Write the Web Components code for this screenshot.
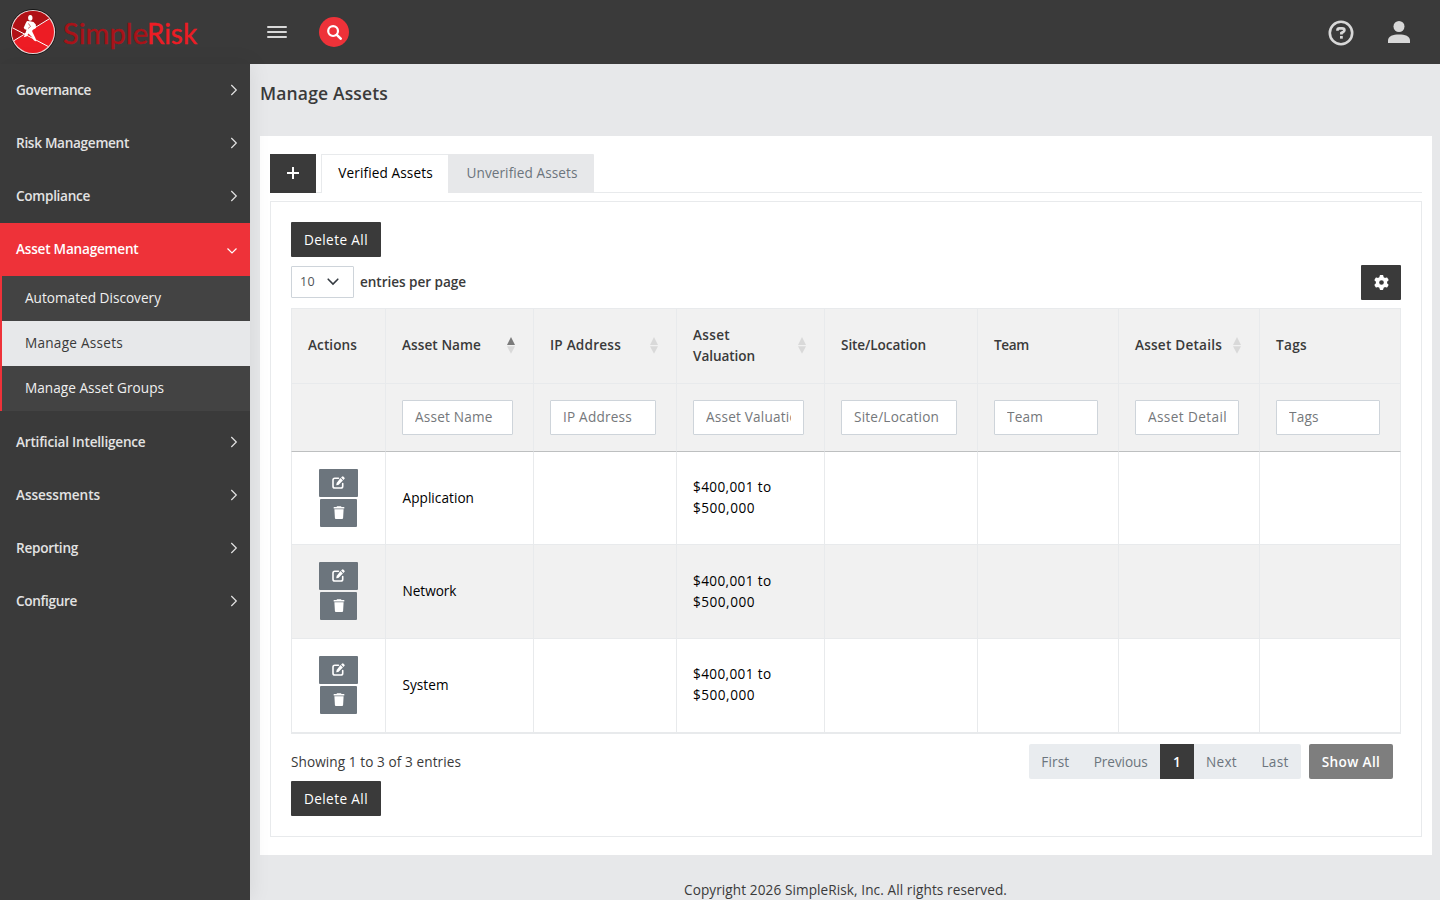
<!DOCTYPE html>
<html lang="en">
<head>
<meta charset="UTF-8">
<title>Manage Assets</title>
<style>
    body {
        margin: 0;
        font-family: "Open Sans", "Noto Sans", sans-serif;
        font-size: 13.6px;
        line-height: 21px;
        color: #3a3a3a;
        background: #e7e8ea;
    }
</style>
</head>
<body>
<risk-app></risk-app>
<script>
const icons = {
    chevron: '<svg width="8" height="12" viewBox="0 0 8 12"><path d="M1.3 1l5 5-5 5" fill="none" stroke="currentColor" stroke-width="1.2"/></svg>',
    down: '<svg width="12" height="8" viewBox="0 0 12 8"><path d="M1.5 1.5L6 6l4.500-4.500" fill="none" stroke="currentColor" stroke-width="1.2"/></svg>',
    search: '<svg width="15" height="15" viewBox="0 0 15 15" fill="none" stroke="currentColor"><circle cx="6.100" cy="6.100" r="4.900" stroke-width="2.200"/><path d="M9.800 9.800l3.900 3.900" stroke-width="2.500" stroke-linecap="round"/></svg>',
    help: '<svg width="26" height="26" viewBox="0 0 26 26" fill="none" stroke="#d8d8d8"><circle cx="13" cy="13" r="11.200" stroke-width="2.600"/><path d="M9.500 10.800V10c0-1 .8-1.700 1.900-1.700h2.800c1.300 0 2.200.8 2.200 1.900 0 1.100-.7 1.600-1.700 2.100l-1.300.8v1.400" stroke-width="2.700"/><path d="M12 17.300h2.800" stroke-width="2.700"/></svg>',
    user: '<svg width="22" height="22" viewBox="0 0 22 22" fill="#d8d8d8"><circle cx="11" cy="5.500" r="5.500"/><path d="M0 22v-2.700C0 15 5 13.400 11 13.400s11 1.600 11 5.900V22z"/></svg>',
    plus: '<svg width="12" height="12" viewBox="0 0 12 12"><path d="M6 .5v11M.5 6h11" stroke="#fff" stroke-width="2" stroke-linecap="round"/></svg>',
    gear: '<svg width="15" height="15" viewBox="0 0 512 512"><path fill="#fff" d="M495.900 166.600c3.200 8.700 .5 18.400-6.400 24.600l-43.300 39.400c1.100 8.300 1.700 16.800 1.700 25.400s-.6 17.100-1.700 25.400l43.300 39.400c6.900 6.200 9.600 15.900 6.400 24.600c-4.400 11.900-9.700 23.300-15.800 34.300l-4.700 8.100c-6.600 11-14 21.400-22.100 31.200c-5.900 7.200-15.700 9.600-24.500 6.800l-55.700-17.700c-13.400 10.300-28.200 18.900-44 25.400l-12.500 57.100c-2 9.100-9 16.300-18.200 17.800c-13.800 2.300-28 3.500-42.500 3.500s-28.700-1.200-42.500-3.500c-9.200-1.500-16.200-8.700-18.200-17.800l-12.500-57.100c-15.800-6.500-30.600-15.100-44-25.400L83.100 425.900c-8.800 2.800-18.600 .3-24.500-6.800c-8.100-9.800-15.500-20.200-22.100-31.200l-4.700-8.100c-6.100-11-11.400-22.400-15.800-34.300c-3.200-8.700-.5-18.400 6.400-24.600l43.300-39.400C64.600 273.100 64 264.600 64 256s.6-17.100 1.700-25.400L22.400 191.200c-6.900-6.200-9.600-15.900-6.400-24.600c4.400-11.900 9.700-23.300 15.800-34.300l4.700-8.100c6.600-11 14-21.400 22.100-31.200c5.900-7.200 15.700-9.600 24.500-6.800l55.700 17.700c13.400-10.300 28.200-18.900 44-25.400l12.500-57.100c2-9.100 9-16.300 18.200-17.800C227.300 1.200 241.500 0 256 0s28.700 1.200 42.500 3.500c9.200 1.500 16.200 8.700 18.200 17.800l12.500 57.100c15.800 6.500 30.600 15.100 44 25.400l55.700-17.700c8.800-2.800 18.600-.3 24.500 6.800c8.100 9.800 15.500 20.200 22.100 31.200l4.700 8.100c6.100 11 11.400 22.400 15.800 34.300zM256 336a80 80 0 1 0 0-160 80 80 0 1 0 0 160z"/></svg>',
    edit: '<svg width="13" height="13" viewBox="0 0 13 13"><path d="M6.500 2.300H2.800A1.800 1.800 0 0 0 1 4.100v6.100A1.800 1.800 0 0 0 2.800 12h6.100a1.800 1.800 0 0 0 1.800-1.800V7.500" fill="none" stroke="#fff" stroke-width="1.600" stroke-linecap="round"/><path fill="#fff" d="M9.900.7a1.200 1.200 0 0 1 1.700 0l.7.7a1.200 1.200 0 0 1 0 1.700l-.8.8-2.400-2.400zM8.500 2.100l2.400 2.400-4 4c-.2.200-.4.300-.7.400l-2 .4.400-2c.1-.3.2-.5.400-.7z"/></svg>',
    trash: '<svg width="12" height="13" viewBox="0 0 12 13" fill="#fff"><path d="M4 .2h4l.5.9h2.800v1.500H.7V1.100h2.800zM1.400 3.200h9.200L10.100 12a1 1 0 0 1-1 .9H2.900a1 1 0 0 1-1-.9z"/></svg>'
};

// Text run that spaces its letters out to a given width
class FitText extends HTMLElement {
    constructor() {
        super();
        this.attachShadow({ mode: 'open' });
        this.shadowRoot.innerHTML = /* html */`
        <style>
            :host { display: inline-block; white-space: nowrap; }
        </style>
        <slot></slot>`;
    }

    connectedCallback() {
        const width = Number(this.getAttribute('w'));
        if (!width) return;
        const natural = this.getBoundingClientRect().width;
        this.style.letterSpacing = ((width - natural) / this.textContent.length).toFixed(3) + 'px';
    }
}

class RiskLogo extends HTMLElement {
    constructor() {
        super();
        this.attachShadow({ mode: 'open' });
        this.shadowRoot.innerHTML = /* html */`
        <style>
            :host { display: block; width: 250px; height: 64px; }
            svg { display: block; }
            text { font-family: Lato, sans-serif; font-size: 28.500px; stroke-width: .4px; }
        </style>
        <svg width="250" height="64" viewBox="0 0 250 64">
            <defs><clipPath id="disc"><circle cx="33" cy="32" r="21"/></clipPath></defs>
            <circle cx="33" cy="32" r="22.900" fill="#151515"/>
            <circle cx="33" cy="32" r="22.100" fill="#e9d5d5"/>
            <g clip-path="url(#disc)">
                <path fill="#ed1c24" d="M10 8h46v48H10z"/>
                <path fill="#b01116" d="M10 8h46v7L25 34.500 10 26z"/>
                <path fill="#b01116" d="M10 26l15 8.500L10 43z"/>
                <path d="M10 26.500L34 39l18 9.500M11 42.500l42-26" fill="none" stroke="#fff" stroke-width="1"/>
            </g>
            <g fill="#fff">
                <ellipse cx="30.300" cy="17.800" rx="2.200" ry="2.900"/>
                <path d="M27 21l3 .3 3.500.7 2.300 2.500.2 3.500-3.500 2-.3 1.500 1.500 3 1.800 3.800.8 3.200-2.300-1-2.500-4-3-3-2 3-2.800.7 1.500-3.500 1.300-4-1.800-.5-1-1.500 2-4.500z"/>
            </g>
            <path d="M28.500 23.500l2 3-2.500 2" fill="none" stroke="#b01116" stroke-width=".6"/>
            <text x="63" y="43.500" fill="#a91218" stroke="#a91218" textLength="85" lengthAdjust="spacingAndGlyphs">Simple</text>
            <text x="147" y="43.500" fill="#ed1c24" stroke="#ed1c24" textLength="50" lengthAdjust="spacingAndGlyphs">Risk</text>
        </svg>`;
    }
}

class TopBar extends HTMLElement {
    constructor() {
        super();
        this.attachShadow({ mode: 'open' });
        this.shadowRoot.innerHTML = /* html */`
        <style>
            :host { display: flex; align-items: center; height: 64px; background: #3a3a3a; }
            .burger { display: grid; gap: 3px; margin: 0 32px 0 17px; }
            .burger i { width: 20px; height: 2px; background: #d8d8d8; border-radius: 1px; }
            .search { display: grid; place-items: center; width: 30px; height: 30px; border-radius: 50%; background: #ee3239; color: #fff; }
            .right { display: flex; align-items: center; gap: 34px; margin-left: auto; margin-right: 30px; }
            .right svg:first-child { margin-top: 2px; }
            svg { display: block; }
        </style>
        <risk-logo></risk-logo>
        <div class="burger"><i></i><i></i><i></i></div>
        <div class="search">${icons.search}</div>
        <div class="right">${icons.help}${icons.user}</div>`;
    }
}

class NavItem extends HTMLElement {
    constructor() {
        super();
        this.attachShadow({ mode: 'open' });
        const open = this.hasAttribute('open');
        this.shadowRoot.innerHTML = /* html */`
        <style>
            :host { display: block; color: #e3e3e3; }
            :host([open]) { margin-bottom: 5px; }
            .row { box-sizing: border-box; display: flex; align-items: center; justify-content: space-between; height: 53px; padding: 0 12px 2px 16px; font-weight: 550; }
            :host([open]) .row { background: #ee3239; color: #fff; }
            svg { display: block; margin-top: ${open ? 4 : 1}px; }
            .sub { border-left: 2px solid #ee3239; background: #434343; }
            :host(:not([open])) .sub { display: none; }
        </style>
        <div class="row"><fit-text w="${this.getAttribute('w')}">${this.getAttribute('label')}</fit-text>${open ? icons.down : icons.chevron}</div>
        <div class="sub"><slot></slot></div>`;
    }
}

class NavLink extends HTMLElement {
    constructor() {
        super();
        this.attachShadow({ mode: 'open' });
        this.shadowRoot.innerHTML = /* html */`
        <style>
            :host { box-sizing: border-box; display: flex; align-items: center; height: 45px; padding: 0 0 2px 23px; color: #f0f0f0; font-weight: 500; }
            :host([active]) { background: #e7e8ea; color: #3a3a3a; }
        </style>
        <slot></slot>`;
    }
}

class SideNav extends HTMLElement {
    constructor() {
        super();
        this.attachShadow({ mode: 'open' });
        this.shadowRoot.innerHTML = /* html */`
        <style>
            :host { display: block; background: #3a3a3a; box-shadow: 1px 0 20px rgba(0, 0, 0, .08); }
        </style>
        <nav-item label="Governance" w="75"></nav-item>
        <nav-item label="Risk Management" w="113"></nav-item>
        <nav-item label="Compliance" w="74"></nav-item>
        <nav-item label="Asset Management" w="122.500" open>
            <nav-link><fit-text w="136">Automated Discovery</fit-text></nav-link>
            <nav-link active><fit-text w="98">Manage Assets</fit-text></nav-link>
            <nav-link><fit-text w="139">Manage Asset Groups</fit-text></nav-link>
        </nav-item>
        <nav-item label="Artificial Intelligence" w="129.500"></nav-item>
        <nav-item label="Assessments" w="84"></nav-item>
        <nav-item label="Reporting" w="62"></nav-item>
        <nav-item label="Configure" w="61"></nav-item>`;
    }
}

class UiButton extends HTMLElement {
    constructor() {
        super();
        this.attachShadow({ mode: 'open' });
        this.shadowRoot.innerHTML = /* html */`
        <style>
            :host { box-sizing: border-box; display: flex; align-items: center; justify-content: center; width: 90px; height: 35px; padding-bottom: 1px; background: #3a3a3a; color: #fff; border-radius: 1px; font-weight: 500; }
            :host([kind=icon]) { width: 40px; }
            :host([kind=muted]) { width: 84px; background: #7e7e7e; font-weight: 600; border-radius: 2px; }
            :host([kind=edit]) { width: 39px; height: 28px; background: #6c757d; }
            :host([kind=trash]) { width: 37px; height: 28px; background: #6c757d; }
        </style>
        <slot></slot>`;
    }
}

class AssetTabs extends HTMLElement {
    constructor() {
        super();
        this.attachShadow({ mode: 'open' });
        this.shadowRoot.innerHTML = /* html */`
        <style>
            :host { display: flex; height: 39px; box-shadow: inset 0 -1px #e8eaec; }
            div { display: grid; place-items: center; box-sizing: border-box; padding-bottom: 2px; }
            .add { width: 46px; background: #3a3a3a; margin-right: 5px; }
            .on { width: 127px; background: #fff; border: 1px solid #e8eaec; border-bottom: 0; border-right: 0; color: #000; padding: 0 0 3px 1px; }
            .off { width: 146px; background: #e7e8ea; color: #6c757d; border-radius: 0 1px 0 0; padding-left: 2px; }
            svg { display: block; }
        </style>
        <div class="add">${icons.plus}</div>
        <div class="on"><fit-text w="94.500">Verified Assets</fit-text></div>
        <div class="off"><fit-text w="111">Unverified Assets</fit-text></div>`;
    }
}

class AssetTable extends HTMLElement {
    constructor() {
        super();
        this.attachShadow({ mode: 'open' });
    }

    connectedCallback() {
        this.columns = [
            { title: 'Actions', w: 49 },
            { title: 'Asset Name', w: 79, hint: 'Asset Name', sort: 'asc' },
            { title: 'IP Address', w: 71, hint: 'IP Address', sort: 'none' },
            { title: 'Asset Valuation', w: 62, hint: 'Asset Valuation', sort: 'none' },
            { title: 'Site/Location', w: 85, hint: 'Site/Location' },
            { title: 'Team', w: 35, hint: 'Team' },
            { title: 'Asset Details', w: 87, hint: 'Asset Details', sort: 'none' },
            { title: 'Tags', w: 31, hint: 'Tags' }
        ];
        this.assets = [['Application', 71.5], ['Network', 54], ['System', 46]];
        this.render();
    }

    title(column) {
        if (column.title === 'Asset Valuation') {
            return '<span><fit-text w="37">Asset</fit-text><br><fit-text w="62">Valuation</fit-text></span>';
        }
        return `<fit-text w="${column.w}">${column.title}</fit-text>`;
    }

    arrows(sort) {
        if (!sort) return '';
        return `<svg class="sort" width="8" height="17" viewBox="0 0 8 17">
            <path d="M0 8l4-8 4 8z" fill="${sort === 'asc' ? '#7b7b7b' : '#d9d9d9'}"/><path d="M0 9.300h8l-4 7.500z" fill="#d9d9d9"/></svg>`;
    }

    row(asset) {
        const [name, width] = asset;
        return /* html */`
        <div class="row body">
            <div class="actions"><ui-button kind="edit">${icons.edit}</ui-button><ui-button kind="trash">${icons.trash}</ui-button></div>
            <div><fit-text w="${width}">${name}</fit-text></div>
            <div></div>
            <div><span><fit-text w="78.500">$400,001 to</fit-text><br><fit-text w="62">$500,000</fit-text></span></div>
            <div></div><div></div><div></div><div></div>
        </div>`;
    }

    render() {
        this.shadowRoot.innerHTML = /* html */`
        <style>
            :host { display: block; border-bottom: 2px solid #e8eaec; }
            .row { display: grid; grid-template-columns: 94px 148px 143px 148px 153px 141px 141px 142px; height: 94px; }
            .row > div { box-sizing: border-box; min-width: 0; display: flex; align-items: center; border-top: 1px solid #e8eaec; border-left: 1px solid #e8eaec; padding: 0 20px 3px 16px; }
            .row > div:last-child { border-right: 1px solid #e8eaec; }
            .head { height: 75px; background: #f1f1f1; font-weight: 650; color: #3a3a3a; }
            .head > div { justify-content: space-between; }
            .row.filters { height: 68px; background: #f1f1f1; }
            .row.filters > div { padding-bottom: 0; }
            .filters + .body { height: 93px; }
            .filters + .body > div { border-top-color: #bdbfc0; padding-bottom: 2px; }
            .body { color: #000; }
            .body > div:nth-child(2) { padding-left: 16.500px; }
            .body:nth-of-type(4) { background: #f1f1f1; }
            .body:nth-of-type(4) > div:nth-child(4) { padding-bottom: 1px; }
            .row > .actions { flex-direction: column; justify-content: center; gap: 2px; padding: 0 0 1px; }
            .filters + .body > .actions { padding-bottom: 0; }
            .head > div:nth-child(2), .head > div:nth-child(3), .head > div:nth-child(4), .head > div:nth-child(7) { padding-right: 18.500px; }
            svg { display: block; }
            .sort { margin-top: 2px; }
            input { box-sizing: border-box; width: 100%; height: 35px; padding: 0 12px 2px; border: 1px solid #ced4da; border-radius: 1px; background: #fff; font: inherit; letter-spacing: .2px; }
            input[placeholder="Asset Details"] { letter-spacing: .4px; }
            input::placeholder { color: #75787b; opacity: 1; }
        </style>
        <div class="row head">${this.columns.map(c => `<div>${this.title(c)}${this.arrows(c.sort)}</div>`).join('')}</div>
        <div class="row filters">${this.columns.map(c => `<div>${c.hint ? `<input placeholder="${c.hint}">` : ''}</div>`).join('')}</div>
        ${this.assets.map(a => this.row(a)).join('')}`;
    }
}

class PageLinks extends HTMLElement {
    constructor() {
        super();
        this.attachShadow({ mode: 'open' });
        this.shadowRoot.innerHTML = /* html */`
        <style>
            :host { display: flex; gap: 8px; }
            .pages { display: grid; grid-template-columns: 52.500px 78.500px 34px 55px 52px; height: 35px; background: #e9ecef; color: #6c757d; border-radius: 2px; }
            .pages div { display: grid; place-items: center; padding-bottom: 1px; }
            .pages .on { background: #3a3a3a; color: #fff; font-weight: 600; }
        </style>
        <div class="pages">
            <div><fit-text w="28">First</fit-text></div>
            <div><fit-text w="54">Previous</fit-text></div>
            <div class="on">1</div>
            <div><fit-text w="31">Next</fit-text></div>
            <div><fit-text w="27">Last</fit-text></div>
        </div>
        <ui-button kind="muted"><fit-text w="58.500">Show All</fit-text></ui-button>`;
    }
}

class AssetPanel extends HTMLElement {
    constructor() {
        super();
        this.attachShadow({ mode: 'open' });
        this.shadowRoot.innerHTML = /* html */`
        <style>
            :host { display: block; box-sizing: border-box; height: 636px; margin-top: 8px; padding: 20px; border: 1px solid #e8eaec; }
            .tools { display: flex; align-items: center; height: 35px; margin: 8px 0; }
            .tools ui-button { margin-left: auto; }
            .select { box-sizing: border-box; display: flex; align-items: center; justify-content: space-between; width: 63px; height: 32px; padding: 0 14px 1px 8px; margin: 0 6px 1px 0; border: 1px solid #ced4da; border-radius: 1px; color: #4f5357; font-size: 12.500px; }
            .select svg { display: block; margin-top: 1px; }
            b { font-weight: 650; padding-bottom: 2px; }
            .foot { display: flex; align-items: center; justify-content: space-between; height: 35px; margin: 10px 8px 2px 0; }
            .foot > fit-text { margin-bottom: 1px; }
        </style>
        <ui-button><fit-text w="64">Delete All</fit-text></ui-button>
        <div class="tools">
            <div class="select"><fit-text w="15">10</fit-text><svg width="12" height="8" viewBox="0 0 12 8"><path d="M1.200 1.200L6 6l4.800-4.800" fill="none" stroke="#343a40" stroke-width="1.600" stroke-linecap="round"/></svg></div>
            <b><fit-text w="106">entries per page</fit-text></b>
            <ui-button kind="icon">${icons.gear}</ui-button>
        </div>
        <asset-table></asset-table>
        <div class="foot"><fit-text w="170">Showing 1 to 3 of 3 entries</fit-text><page-links></page-links></div>
        <ui-button><fit-text w="64">Delete All</fit-text></ui-button>`;
    }
}

class RiskApp extends HTMLElement {
    constructor() {
        super();
        this.attachShadow({ mode: 'open' });
        this.shadowRoot.innerHTML = /* html */`
        <style>
            :host { display: grid; grid-template: 64px 836px / 250px 1fr; height: 900px; overflow: hidden; }
            top-bar { grid-column: 1 / -1; z-index: 1; }
            side-nav { z-index: 1; }
            main { padding: 0 8px 0 10px; }
            h1 { margin: 0; height: 72px; line-height: 59px; font-size: 17.500px; font-weight: 600; color: #3a3a3a; }
            .card { box-sizing: border-box; height: 719px; padding: 18px 10px; background: #fff; }
            footer { padding-top: 24px; margin-left: -1px; text-align: center; }
        </style>
        <top-bar></top-bar>
        <side-nav></side-nav>
        <main>
            <h1><fit-text w="128">Manage Assets</fit-text></h1>
            <div class="card">
                <asset-tabs></asset-tabs>
                <asset-panel></asset-panel>
            </div>
            <footer><fit-text w="323">Copyright 2026 SimpleRisk, Inc. All rights reserved.</fit-text></footer>
        </main>`;
    }
}

customElements.define('fit-text', FitText);
customElements.define('risk-logo', RiskLogo);
customElements.define('top-bar', TopBar);
customElements.define('nav-item', NavItem);
customElements.define('nav-link', NavLink);
customElements.define('side-nav', SideNav);
customElements.define('ui-button', UiButton);
customElements.define('asset-tabs', AssetTabs);
customElements.define('asset-table', AssetTable);
customElements.define('page-links', PageLinks);
customElements.define('asset-panel', AssetPanel);
customElements.define('risk-app', RiskApp);
</script>
</body>
</html>
